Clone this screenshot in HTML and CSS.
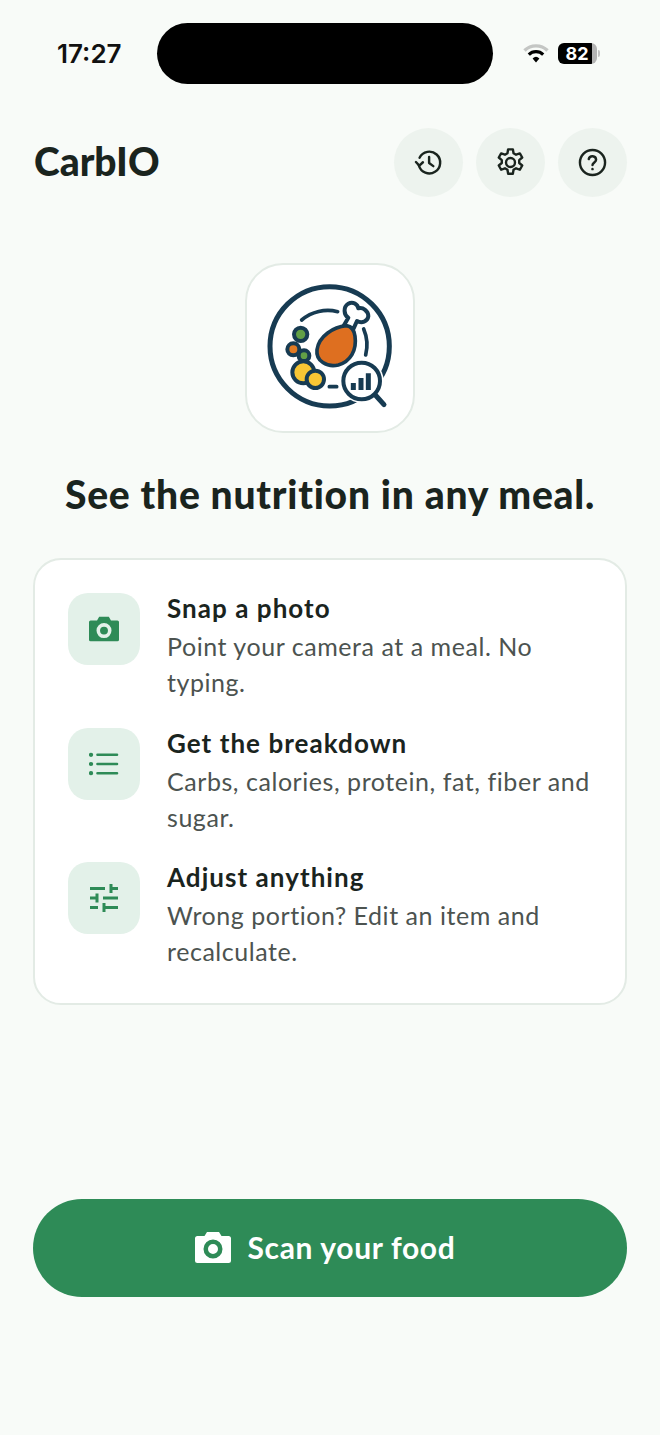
FILE: index.html
```html
<!DOCTYPE html>
<html lang="en">

<head>
  <meta charset="UTF-8" />
  <meta name="viewport" content="width=device-width, initial-scale=1.0" />
  <title>CarbIO</title>
  <link rel="stylesheet" href="styles.css">
</head>

<body>
  <div class="status-bar">
    <span class="time">17:27</span>
    <div class="island"></div>
    <div class="status-icons">
      <svg class="wifi" viewBox="0 0 28 22" fill="none" stroke-linecap="butt">
        <path d="M2.5 7.5a16.5 16.5 0 0 1 23 0" stroke="#c4c6c4" stroke-width="3.4" />
        <path d="M6.8 11.6a10.4 10.4 0 0 1 14.4 0" stroke="#000" stroke-width="3.2" />
        <path d="M10.6 15.4a5 5 0 0 1 6.8 0L14 19.6z" fill="#000" />
      </svg>
      <div class="battery"><span class="battery-level">82</span></div>
      <div class="battery-nub"></div>
    </div>
  </div>

  <header class="top-bar">
    <h1>CarbIO</h1>
    <div class="top-actions">
      <button class="round-btn" aria-label="History">
        <svg viewBox="0 0 24 24" fill="none" stroke="#1a241e" stroke-width="2" stroke-linecap="round" stroke-linejoin="round">
          <path d="M4 14.5A9 9 0 1 0 4.6 8" />
          <path d="M1.6 11.6 4.4 14.6 7.4 11.8" />
          <path d="M12.5 7.5V12.5L16 15" />
        </svg>
      </button>
      <button class="round-btn" aria-label="Settings">
        <svg viewBox="1 1 22 22" fill="none" stroke="#1a241e" stroke-width="1.8" stroke-linejoin="round">
          <path d="M10.2 2h3.6l.5 3 1.9 1.1 2.9-1 1.8 3.1-2.3 2v2.2l2.3 1.9-1.8 3.2-2.9-1.1-1.9 1.1-.5 3h-3.6l-.5-3-1.9-1.1-2.9 1.1-1.8-3.2 2.3-1.9v-2.2l-2.3-2 1.8-3.1 2.9 1 1.9-1.1z" />
          <circle cx="12" cy="12" r="3.4" />
        </svg>
      </button>
      <button class="round-btn" aria-label="Help">
        <svg viewBox="0 0 24 24" fill="none" stroke="#1a241e" stroke-width="2" stroke-linecap="round" stroke-linejoin="round">
          <circle cx="12" cy="12" r="10.4" />
          <path d="M8.9 9.2a3.1 3.1 0 0 1 6.1.6c0 2-3 2.4-3 4.3" />
          <path d="M12 17.4v.1" />
        </svg>
      </button>
    </div>
  </header>

  <main>
    <div class="logo">
      <svg viewBox="36 30 498 498" fill="none" stroke="#173b52" stroke-linecap="round" stroke-linejoin="round">
        <circle cx="284" cy="274" r="179" stroke-width="15" />
        <path d="M200 195A122 122 0 0 1 308 170" stroke-width="11" />
        <path d="M386 222A122 122 0 0 1 392 300" stroke-width="11" />
        <path d="M283 395H305" stroke-width="11" />
        <path d="M326 212 340 188C326 180 324 156 340 146 354 138 368 148 370 160 384 156 400 168 400 184 398 200 380 206 366 198L356 220Z" fill="#fff" stroke-width="12" />
        <path d="M334 212C296 216 252 242 246 284 242 318 276 338 310 330 346 320 366 286 360 244 358 228 350 214 334 212Z" fill="#de6f20" stroke-width="11" />
        <circle cx="197" cy="238" r="20" fill="#62a046" stroke-width="12" />
        <circle cx="175" cy="283" r="18" fill="#e27a22" stroke-width="12" />
        <circle cx="207" cy="302" r="16" fill="#62a046" stroke-width="12" />
        <circle cx="205" cy="352" r="33" fill="#f8c634" stroke-width="12" />
        <circle cx="241" cy="373" r="26" fill="#f8c634" stroke-width="12" />
        <circle cx="380" cy="378" r="66" fill="#fff" stroke="none" />
        <circle cx="380" cy="378" r="55" fill="#fff" stroke-width="12" />
        <path d="M421 420 447 449" stroke-width="15" />
        <path d="M355 384V405M378 369V405M400 355V405" stroke-width="15" stroke-linecap="butt" />
      </svg>
    </div>

    <h2 class="headline">See the nutrition in any meal.</h2>

    <section class="card">
      <div class="feature">
        <div class="feature-icon">
          <svg viewBox="2 2 28 28">
            <path fill-rule="evenodd" fill="#2e8b57" d="M11.500 4.500h9l2 3.500h6a1.500 1.500 0 0 1 1.500 1.500V26a1.500 1.500 0 0 1-1.500 1.500h-25A1.500 1.500 0 0 1 2 26V9.500A1.500 1.500 0 0 1 3.500 8h6zM16 10.500a7 7 0 1 0 0 14 7 7 0 0 0 0-14zM16 13.800a3.700 3.700 0 1 1 0 7.400 3.700 3.700 0 0 1 0-7.400z" />
          </svg>
        </div>
        <div class="feature-text">
          <h3>Snap a photo</h3>
          <p>Point your camera at a meal. No typing.</p>
        </div>
      </div>

      <div class="feature">
        <div class="feature-icon">
          <svg viewBox="1 1 30 30" fill="none" stroke="#2e8b57" stroke-width="2.600" stroke-linecap="round">
            <path d="M9.500 6.800H29M9.500 16H29M9.500 25.200H29" />
            <path d="M3 6.800h.1M3 16h.1M3 25.200h.1" stroke-width="4.200" />
          </svg>
        </div>
        <div class="feature-text">
          <h3>Get the breakdown</h3>
          <p>Carbs, calories, protein, fat, fiber and sugar.</p>
        </div>
      </div>

      <div class="feature">
        <div class="feature-icon">
          <svg viewBox="1 1 30 30" fill="none" stroke="#2e8b57" stroke-width="3">
            <path d="M2 6.500H17M23 6.500H30M23 2V11" />
            <path d="M2 16H9M15 16H30M9 11.500V20.500" />
            <path d="M2 25.500H10M16 25.500H30M16 21V30" />
          </svg>
        </div>
        <div class="feature-text">
          <h3>Adjust anything</h3>
          <p>Wrong portion? Edit an item and recalculate.</p>
        </div>
      </div>
    </section>

    <button class="scan-btn">
      <svg viewBox="0 0 36 32">
        <path fill-rule="evenodd" fill="#fff" d="M12 1h12l2.500 4h7A2.500 2.500 0 0 1 36 7.500v22a2.500 2.500 0 0 1-2.500 2.500h-31A2.500 2.500 0 0 1 0 29.500v-22A2.500 2.500 0 0 1 2.500 5h7zM18 8.500a9.500 9.500 0 1 0 0 19 9.500 9.500 0 0 0 0-19zM18 13a5 5 0 1 1 0 10 5 5 0 0 1 0-10z" />
      </svg>
      Scan your food
    </button>
  </main>
</body>

</html>
```

FILE: styles.css
```css
* {
  margin: 0;
  padding: 0;
  box-sizing: border-box;
}

body {
  font-family: 'Lato', 'Noto Sans', sans-serif;
  background: #f8fbf8;
  color: #1a241e;
  min-height: 100vh;
}

button {
  border: none;
  font-family: inherit;
  cursor: pointer;
}

/* status bar */
.status-bar {
  display: flex;
  align-items: center;
  height: 108px;
  padding: 0 60px 1px 57px;
}

.time {
  width: 100px;
  font-family: 'Inter', sans-serif;
  font-size: 26px;
  font-weight: 600;
  color: #111;
}

.island {
  width: 336px;
  height: 61px;
  background: #000;
  border-radius: 31px;
}

.status-icons {
  display: flex;
  align-items: center;
  margin-left: auto;
}

.wifi {
  width: 28px;
  height: 22px;
  margin-right: 8px;
}

.battery {
  width: 39px;
  height: 21px;
  border-radius: 6px;
  background: linear-gradient(90deg, #000 86%, #b4b4b4 86%);
  overflow: hidden;
}

.battery-level {
  display: block;
  width: 38px;
  text-align: center;
  font-family: 'Inter', sans-serif;
  font-size: 18px;
  font-weight: 700;
  line-height: 21px;
  color: #fff;
}

.battery-nub {
  width: 2px;
  height: 7px;
  margin-left: 1px;
  background: #c4c4c4;
  border-radius: 0 2px 2px 0;
}

/* top bar */
.top-bar {
  display: flex;
  align-items: center;
  justify-content: space-between;
  padding: 20px 33px 0 34px;
}

h1 {
  padding-bottom: 4px;
  font-size: 39px;
  font-weight: 900;
  color: #1a241e;
}

.top-actions {
  display: flex;
  gap: 13px;
}

.round-btn {
  display: flex;
  align-items: center;
  justify-content: center;
  width: 69px;
  height: 69px;
  border-radius: 50%;
  background: #edf3ee;
}

.round-btn svg {
  width: 29px;
  height: 29px;
}

/* main column */
main {
  padding: 66px 33px 0;
}

.logo {
  width: 170px;
  height: 170px;
  margin: 0 auto;
  background: #fff;
  border: 2px solid #e3ebe5;
  border-radius: 38px;
}

.logo svg {
  display: block;
  width: 100%;
  height: 100%;
}

.headline {
  margin-top: 36px;
  text-align: center;
  font-size: 39px;
  font-weight: 900;
  letter-spacing: 0.77px;
  line-height: 50px;
  color: #1a241e;
}

.card {
  display: flex;
  flex-direction: column;
  gap: 25.500px;
  margin-top: 39px;
  padding: 31px 33px 34px;
  background: #fff;
  border: 2px solid #e3ebe5;
  border-radius: 28px;
}

.feature {
  display: flex;
  gap: 27px;
}

.feature-icon {
  display: flex;
  align-items: center;
  justify-content: center;
  flex: 0 0 72px;
  height: 72px;
  margin-top: 2px;
  background: #e3f1e9;
  border-radius: 20px;
}

.feature-icon svg {
  width: 30px;
  height: 30px;
}

.feature-text h3 {
  margin-bottom: 2px;
  font-size: 26px;
  font-weight: 700;
  letter-spacing: 1.05px;
  line-height: 35px;
  color: #1a241e;
}

.feature-text p {
  font-size: 25px;
  letter-spacing: 0.55px;
  line-height: 36px;
  color: #4c5350;
}

/* scan button */
.scan-btn {
  display: flex;
  align-items: center;
  justify-content: center;
  gap: 17px;
  width: 100%;
  height: 98px;
  margin-top: 194px;
  padding: 0 10px 2px 0;
  background: #2e8b57;
  border-radius: 49px;
  color: #fff;
  font-size: 30px;
  font-weight: 700;
  letter-spacing: 0.65px;
}

.scan-btn svg {
  width: 36px;
  height: 32px;
}
```
